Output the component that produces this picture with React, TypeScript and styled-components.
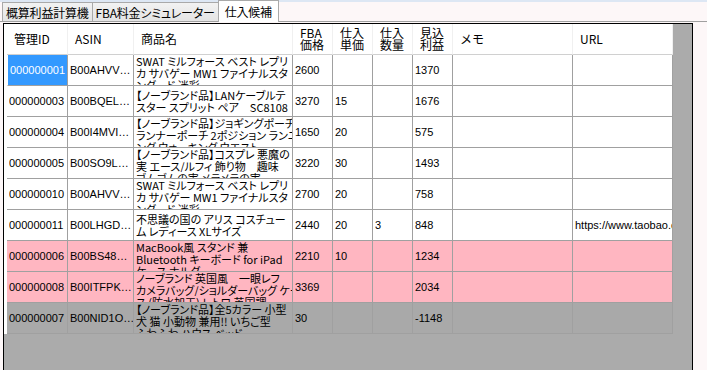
import React from "react";
import styled, { createGlobalStyle, css } from "styled-components";

const GlobalStyle = createGlobalStyle`
  html, body {
    margin: 0;
    padding: 0;
    background: #ffffff;
    overflow: hidden;
  }
  body {
    font-family: "Liberation Sans", "Noto Sans CJK JP", sans-serif;
    font-size: 12px;
    color: #000;
  }
`;

const Window = styled.div`
  width: 707px;
  height: 370px;
  display: flex;
  flex-direction: column;
  background: #fdf7f8;
  overflow: hidden;
`;

const TabStrip = styled.div`
  height: 22px;
  display: flex;
  align-items: flex-end;
  padding-left: 2px;
  border-top: 2px solid #dde7f4;
  box-sizing: border-box;
  border-bottom: 1px solid #a0a0a0;
  flex-shrink: 0;
`;

const Tab = styled.div<{ $active?: boolean }>`
  height: 19px;
  padding: 0 3px;
  display: flex;
  align-items: center;
  box-sizing: border-box;
  border: 1px solid #a9a9a9;
  border-bottom: none;
  margin-right: -1px;
  background: linear-gradient(#f2f2f2, #e4e4e4);
  font-family: "Noto Sans CJK JP", sans-serif;
  font-size: 12px;
  font-feature-settings: "palt";
  letter-spacing: -0.2px;
  white-space: nowrap;
  ${({ $active }) =>
    $active &&
    css`
      height: 22px;
      margin-bottom: -1px;
      padding: 0 6px 1px 6px;
      background: #ffffff;
      position: relative;
      z-index: 1;
    `}
`;

const Panel = styled.div`
  flex: 1;
  display: flex;
  padding: 1px 0 0 3px;
  min-height: 0;
`;

const Grid = styled.div`
  width: 690px;
  height: 400px;
  flex-shrink: 0;
  box-sizing: border-box;
  border: 1px solid #000;
  border-bottom: none;
  background: #ababab;
  display: flex;
  flex-direction: column;
  overflow: hidden;
`;

const RowLine = styled.div`
  display: flex;
  height: 31px;
  flex-shrink: 0;
`;

const RowHead = styled.div`
  width: 3px;
  background: #ffffff;
  flex-shrink: 0;
`;

const HeaderCell = styled.div<{ $w: number }>`
  width: ${({ $w }) => $w}px;
  flex-shrink: 0;
  box-sizing: border-box;
  background: #ffffff;
  border-bottom: 1px solid #d0d0d0;
  border-right: 1px solid #f0f0f0;
  display: flex;
  align-items: center;
  padding-left: 7px;
  font-family: "Noto Sans CJK JP", sans-serif;
  font-size: 12px;
  line-height: 12px;
  white-space: pre;
`;

const tones = {
  plain: "#ffffff",
  pink: "#ffb6c1",
  gray: "#a9a9a9",
};

const Cell = styled.div<{ $w: number; $tone: keyof typeof tones; $selected?: boolean }>`
  width: ${({ $w }) => $w}px;
  flex-shrink: 0;
  box-sizing: border-box;
  border-right: 1px solid #a0a0a0;
  border-bottom: 1px solid #a0a0a0;
  background: ${({ $tone }) => tones[$tone]};
  display: flex;
  flex-direction: column;
  justify-content: safe center;
  padding-left: 2px;
  overflow: hidden;
  font-size: 11px;
  line-height: 12px;
  ${({ $selected }) =>
    $selected &&
    css`
      background: #3399ff;
      color: #ffffff;
      border-left: 1px solid #ffffff;
    `}
`;

const Line = styled.div<{ $cjk?: boolean }>`
  white-space: nowrap;
  overflow: hidden;
  flex-shrink: 0;
  height: 12px;
  ${({ $cjk }) =>
    $cjk &&
    css`
      font-family: "Noto Sans CJK JP", sans-serif;
      font-size: 11px;
      font-feature-settings: "palt";
    `}
`;

const columns = [
  { key: "id", title: "管理ID", w: 61 },
  { key: "asin", title: "ASIN", w: 66 },
  { key: "name", title: "商品名", w: 159 },
  { key: "fba", title: "FBA\n価格", w: 40 },
  { key: "unit", title: "仕入\n単価", w: 40 },
  { key: "qty", title: "仕入\n数量", w: 40 },
  { key: "profit", title: "見込\n利益", w: 40 },
  { key: "memo", title: "メモ", w: 120 },
  { key: "url", title: "URL", w: 100 },
] as const;

type Item = {
  id: string;
  asin: string;
  name: string[];
  fba: string;
  unit: string;
  qty: string;
  profit: string;
  memo: string;
  url: string;
  tone: keyof typeof tones;
};

const swat = ["SWAT ミルフォース ベスト レプリ", "カ サバゲー MW1 ファイナルスタ", "ンダード 迷彩"];

const items: Item[] = [
  { id: "000000001", asin: "B00AHVV…", name: swat, fba: "2600", unit: "", qty: "", profit: "1370", memo: "", url: "", tone: "plain" },
  { id: "000000003", asin: "B00BQEL…", name: ["【ノーブランド品】LANケーブルテ", "スター スプリット ペア　SC8108"], fba: "3270", unit: "15", qty: "", profit: "1676", memo: "", url: "", tone: "plain" },
  { id: "000000004", asin: "B00I4MVI…", name: ["【ノーブランド品】ジョギングポーチ", "ランナーポーチ 2ポジション ランニ", "ング ウォーキング ウエスト"], fba: "1650", unit: "20", qty: "", profit: "575", memo: "", url: "", tone: "plain" },
  { id: "000000005", asin: "B00SO9L…", name: ["【ノーブランド品】コスプレ 悪魔の", "実 エース/ルフィ 飾り物　趣味", "ゴムゴムの実 メラメラの実"], fba: "3220", unit: "30", qty: "", profit: "1493", memo: "", url: "", tone: "plain" },
  { id: "000000010", asin: "B00AHVV…", name: swat, fba: "2700", unit: "20", qty: "", profit: "758", memo: "", url: "", tone: "plain" },
  { id: "000000011", asin: "B00LHGD…", name: ["不思議の国の アリス コスチュー", "ム レディース XLサイズ"], fba: "2440", unit: "20", qty: "3", profit: "848", memo: "", url: "https://www.taobao.com/item", tone: "plain" },
  { id: "000000006", asin: "B00BS48…", name: ["MacBook風 スタンド 兼", "Bluetooth キーボード for iPad", "ケース ホルダー"], fba: "2210", unit: "10", qty: "", profit: "1234", memo: "", url: "", tone: "pink" },
  { id: "000000008", asin: "B00ITFPK…", name: ["ノーブランド 英国風　一眼レフ", "カメラバッグ/ショルダーバッグ ケー", "ス (防水加工) レトロ 英国調"], fba: "3369", unit: "", qty: "", profit: "2034", memo: "", url: "", tone: "pink" },
  { id: "000000007", asin: "B00NID1O…", name: ["【ノーブランド品】全5カラー 小型", "犬 猫 小動物 兼用!! いちご型", "ふわふわ ハウス ベッド"], fba: "30", unit: "", qty: "", profit: "-1148", memo: "", url: "", tone: "gray" },
];

const isCjk = (s: string) => /[^\x00-\x7f…]/.test(s);

const App = () => {
  return (
    <>
      <GlobalStyle />
      <Window>
        <TabStrip>
          <Tab>概算利益計算機</Tab>
          <Tab>FBA料金シミュレーター</Tab>
          <Tab $active>仕入候補</Tab>
        </TabStrip>
        <Panel>
          <Grid>
            <RowLine>
              <RowHead />
              {columns.map((c) => (
                <HeaderCell key={c.key} $w={c.w}>
                  {c.title}
                </HeaderCell>
              ))}
            </RowLine>
            {items.map((item, r) => (
              <RowLine key={item.id}>
                <RowHead />
                {columns.map((c, i) => {
                  const value = item[c.key];
                  const lines = Array.isArray(value) ? value : [value];
                  return (
                    <Cell key={c.key} $w={c.w} $tone={item.tone} $selected={r === 0 && i === 0}>
                      {lines.map((l, j) => (
                        <Line key={j} $cjk={isCjk(l)}>
                          {l}
                        </Line>
                      ))}
                    </Cell>
                  );
                })}
              </RowLine>
            ))}
          </Grid>
        </Panel>
      </Window>
    </>
  );
};

export default App;
